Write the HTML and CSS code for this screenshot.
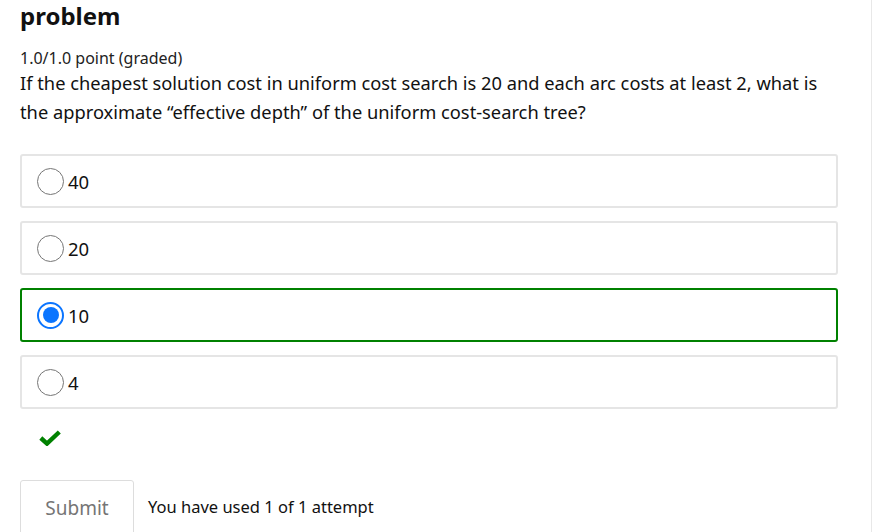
FILE: index.html
```html
<!DOCTYPE html>
<html>
<head>
<meta charset="utf-8">
<link rel="stylesheet" href="styles.css">
</head>
<body>
<div class="page">
  <h2 class="title">problem</h2>
  <div class="points">1.0/1.0 point (graded)</div>
  <p class="question">If the cheapest solution cost in uniform cost search is 20 and each arc costs at least 2, what is the approximate “effective depth” of the uniform cost-search tree?</p>
  <div class="options">
    <label class="option"><span class="radio"></span><span class="label">40</span></label>
    <label class="option"><span class="radio"></span><span class="label">20</span></label>
    <label class="option correct"><span class="radio checked"></span><span class="label">10</span></label>
    <label class="option"><span class="radio"></span><span class="label">4</span></label>
  </div>
  <div class="status">
    <svg class="check" width="22" height="16" viewBox="0 0 22 16"><path d="M1.8 8 L8 13.6 L20.3 2" fill="none" stroke="#008100" stroke-width="4.4"/></svg>
  </div>
  <div class="actions">
    <button class="submit">Submit</button>
    <span class="attempts">You have used 1 of 1 attempt</span>
  </div>
</div>
</body>
</html>
```
FILE: styles.css
```css
html, body { margin: 0; padding: 0; background: #fff; }
body { font-family: "Noto Sans", "Open Sans", sans-serif; color: #111; overflow: hidden; }
.page {
  width: 872px; height: 532px; box-sizing: border-box;
  border-right: 1px solid #e8e8e8;
  padding: 0 0 0 20px;
}
.title { margin: 0; font-size: 24px; line-height: 32px; font-weight: 700; color: #111; }
.points { margin-top: 16px; font-size: 16px; line-height: 20px; color: #222; }
.question { margin: 0; font-size: 18.3px; line-height: 29px; width: 818px; color: #111; }
.options { margin-top: 28px; display: flex; flex-direction: column; gap: 13px; width: 818px; }
.option {
  display: flex; align-items: center; height: 54px; box-sizing: border-box;
  border: 2px solid #e5e5e5; border-radius: 3px; padding-left: 15px;
}
.option.correct { border-color: #008100; }
.radio {
  width: 27px; height: 27px; box-sizing: border-box; border-radius: 50%;
  border: 1px solid #767676; background: #fff; flex: none; position: relative;
}
.radio.checked { border: 2px solid #0b75ff; }
.radio.checked::after {
  content: ""; position: absolute; left: 3.5px; top: 3.5px; width: 16px; height: 16px;
  border-radius: 50%; background: #0b75ff;
}
.label { margin-left: 4px; font-size: 18.5px; color: #111; }
.status { margin-top: 21px; padding-left: 19px; height: 16px; }
.check { display: block; }
.actions { margin-top: 34px; display: flex; align-items: center; }
.submit {
  width: 114px; height: 56px; box-sizing: border-box; background: #fff;
  border: 1px solid #ddd; border-radius: 3px; font-family: inherit; font-size: 19px; color: #757575;
  padding: 0 0 0; flex: none;
}
.attempts { margin-left: 14px; margin-top: -3px; font-size: 16.5px; color: #111; }
```
